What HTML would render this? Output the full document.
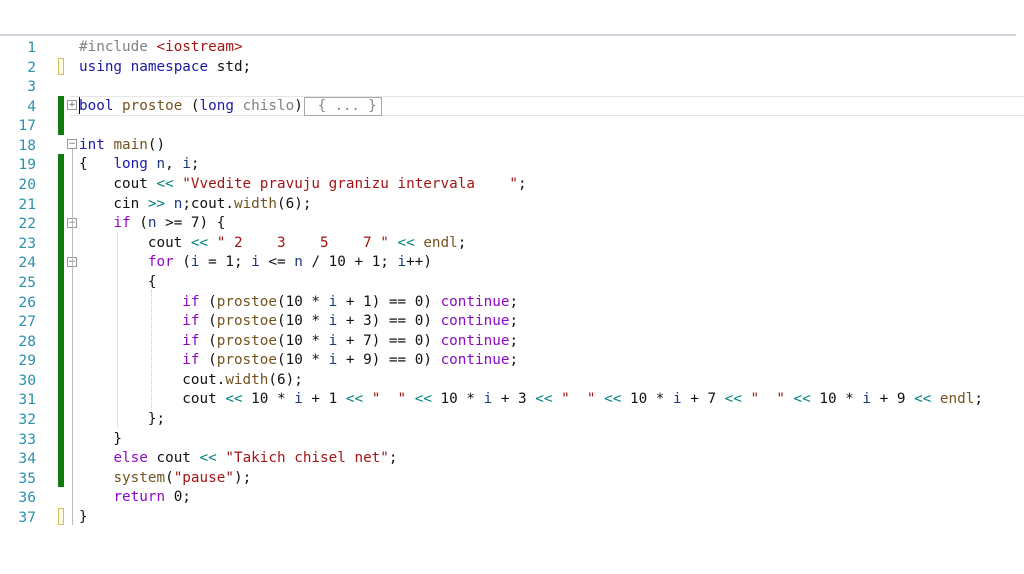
<!DOCTYPE html>
<html><head><meta charset="utf-8"><style>
html,body{margin:0;padding:0;background:#fff;width:1024px;height:574px;overflow:hidden;position:relative}
.top{position:absolute;left:0;top:34px;width:1016px;height:2px;background:#d4d4dc}
.ln{position:absolute;left:0;width:36px;text-align:right;font:14.6px "DejaVu Sans Mono","Liberation Mono",monospace;color:#2b91af;line-height:19.58px}
.code{position:absolute;left:79px;white-space:pre;font:14.3px "DejaVu Sans Mono","Liberation Mono",monospace;color:#111;line-height:19.58px}
.k{color:#1a1aa6}.c{color:#8f08c4}.f{color:#74531f}.s{color:#a31515}.v{color:#1f377f}.o{color:#008080}.p{color:#808080}
.g{position:absolute;left:58px;width:6px;background:#107c10}
.y{position:absolute;left:58px;width:4px;height:15px;border:1px solid #c9c060;background:#fffbe0}
.box{position:absolute;width:8px;height:8px;border:1px solid #999;font:9px/8px "DejaVu Sans",sans-serif;color:#666;text-align:center;left:67px;background:#fff}
.vl{position:absolute;left:72px;width:1px;background:#bbb}
.dg{position:absolute;width:0;border-left:1px dotted #c8c8c8}
</style></head><body>
<div class="top"></div>
<div style="position:absolute;left:70px;top:96px;width:960px;height:0;border-top:1px solid #e6e6e6"></div>
<div style="position:absolute;left:70px;top:115px;width:960px;height:0;border-top:1px solid #e6e6e6"></div>
<div style="position:absolute;left:304px;top:97px;width:76px;height:17px;border:1px solid #a8a8a8;font:14px/17px 'DejaVu Sans Mono',monospace;color:#888;text-align:center;white-space:pre"> { ... }</div>

<div class="ln" style="top:38px">1<br>2<br>3<br>4<br>17<br>18<br>19<br>20<br>21<br>22<br>23<br>24<br>25<br>26<br>27<br>28<br>29<br>30<br>31<br>32<br>33<br>34<br>35<br>36<br>37</div>

<div class="y" style="top:58px"></div>
<div class="y" style="top:508px"></div>
<div class="g" style="top:96px;height:39px"></div>
<div class="g" style="top:154px;height:333px"></div>

<div class="box" style="top:100px">+</div>
<div class="box" style="top:139px">−</div>
<div class="box" style="top:218px">−</div>
<div class="box" style="top:257px">−</div>
<div class="vl" style="top:149px;height:376px"></div>
<div class="dg" style="left:117px;top:232px;height:195px"></div>
<div class="dg" style="left:151px;top:290px;height:120px"></div>

<div class="code" style="top:38px"><span class="p">#include</span> <span class="s">&lt;iostream&gt;</span>
<span class="k">using</span> <span class="k">namespace</span> std;

<span class="k">bool</span> <span class="f">prostoe</span> (<span class="k">long</span> <span class="p">chislo</span>)

<span class="k">int</span> <span class="f">main</span>()
{   <span class="k">long</span> <span class="v">n</span>, <span class="v">i</span>;
    cout <span class="o">&lt;&lt;</span> <span class="s">"Vvedite pravuju granizu intervala    "</span>;
    cin <span class="o">&gt;&gt;</span> <span class="v">n</span>;cout.<span class="f">width</span>(6);
    <span class="c">if</span> (<span class="v">n</span> &gt;= 7) {
        cout <span class="o">&lt;&lt;</span> <span class="s">" 2    3    5    7 "</span> <span class="o">&lt;&lt;</span> <span class="f">endl</span>;
        <span class="c">for</span> (<span class="v">i</span> = 1; <span class="v">i</span> &lt;= <span class="v">n</span> / 10 + 1; <span class="v">i</span>++)
        {
            <span class="c">if</span> (<span class="f">prostoe</span>(10 * <span class="v">i</span> + 1) == 0) <span class="c">continue</span>;
            <span class="c">if</span> (<span class="f">prostoe</span>(10 * <span class="v">i</span> + 3) == 0) <span class="c">continue</span>;
            <span class="c">if</span> (<span class="f">prostoe</span>(10 * <span class="v">i</span> + 7) == 0) <span class="c">continue</span>;
            <span class="c">if</span> (<span class="f">prostoe</span>(10 * <span class="v">i</span> + 9) == 0) <span class="c">continue</span>;
            cout.<span class="f">width</span>(6);
            cout <span class="o">&lt;&lt;</span> 10 * <span class="v">i</span> + 1 <span class="o">&lt;&lt;</span> <span class="s">"  "</span> <span class="o">&lt;&lt;</span> 10 * <span class="v">i</span> + 3 <span class="o">&lt;&lt;</span> <span class="s">"  "</span> <span class="o">&lt;&lt;</span> 10 * <span class="v">i</span> + 7 <span class="o">&lt;&lt;</span> <span class="s">"  "</span> <span class="o">&lt;&lt;</span> 10 * <span class="v">i</span> + 9 <span class="o">&lt;&lt;</span> <span class="f">endl</span>;
        };
    }
    <span class="c">else</span> cout <span class="o">&lt;&lt;</span> <span class="s">"Takich chisel net"</span>;
    <span class="f">system</span>(<span class="s">"pause"</span>);
    <span class="c">return</span> 0;
}</div>
<div style="position:absolute;left:79px;top:97px;width:1px;height:17px;background:#000"></div>
</body></html>
